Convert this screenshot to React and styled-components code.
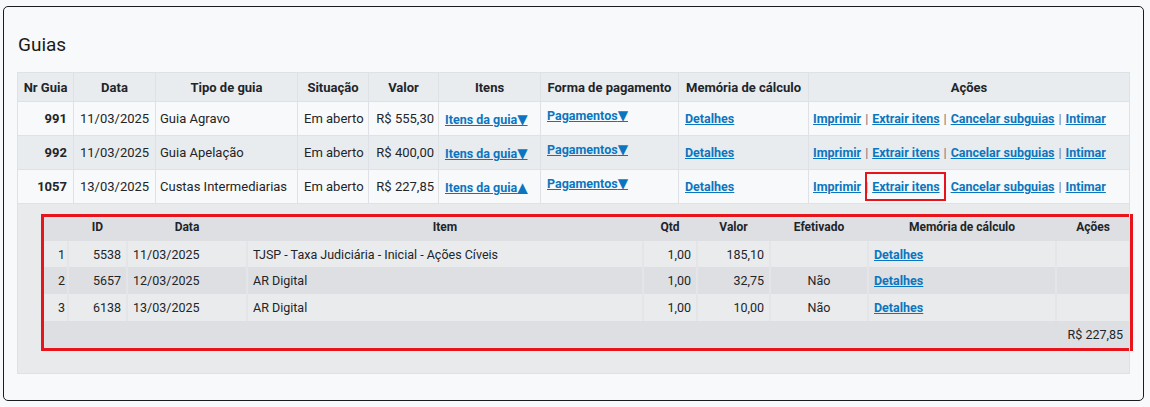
import React from 'react';
import styled, { createGlobalStyle } from 'styled-components';

const GlobalStyle = createGlobalStyle`
  body {
    margin: 0;
    background: #f8f9fa;
    font-family: Roboto, "Liberation Sans", Arial, sans-serif;
    color: #212529;
  }
`;

const Card = styled.div`
  margin: 6px 6px 0 3px;
  width: 1141px;
  height: 395px;
  box-sizing: border-box;
  border: 1px solid #1c1c1c;
  border-radius: 5px;
  background: #f8f9fa;
  padding: 26px 13px 0 13px;
`;

const Title = styled.h2`
  margin: 0 0 15px 1px;
  font-size: 19px;
  font-weight: 400;
  line-height: 24px;
  color: #1a1a1a;
`;

const GuiasTable = styled.table`
  width: 1112px;
  table-layout: fixed;
  border-collapse: collapse;
  font-size: 13px;
`;

const HeadRow = styled.tr`
  height: 29px;
`;

const HeadCell = styled.th`
  padding: 0 4px;
  background: #e9ecef;
  border: 1px solid #dee2e6;
  font-weight: 700;
  text-align: center;
  white-space: nowrap;
`;

const Row = styled.tr`
  height: 34px;
  background: ${p => (p.$striped ? '#e9ecef' : '#f8f9fa')};
`;

const Cell = styled.td`
  padding: 0 ${p => p.$pr || 6}px 0 ${p => p.$pl || 6}px;
  border: 1px solid #dee2e6;
  text-align: ${p => p.$align || 'left'};
  vertical-align: ${p => (p.$top ? 'top' : 'middle')};
  padding-top: ${p => (p.$top ? '5px' : '0')};
  font-weight: ${p => (p.$bold ? 700 : 400)};
  white-space: nowrap;
`;

const Link = styled.a`
  color: #0b76bf;
  font-size: 12.5px;
  font-weight: 700;
  text-decoration: underline;
  cursor: pointer;
`;

const Arrow = styled.span`
  font-family: "DejaVu Sans", sans-serif;
  font-size: 13.5px;
`;

const Sep = styled.span`
  color: #6c757d;
  font-size: 12.5px;
  margin: 0 4px;
`;

const Highlighted = styled(Link)`
  position: relative;
  &::after {
    content: '';
    position: absolute;
    left: -7px;
    right: -6px;
    top: -7px;
    bottom: -7px;
    border: 2px solid #e8141c;
  }
`;

const ExpandedCell = styled.td`
  background: #e9eaec;
  border: 1px solid #dee2e6;
  padding: 10px 0 22px 23px;
`;

const RedFrame = styled.div`
  width: 1092px;
  box-sizing: border-box;
  border: 3px solid #e8141c;
`;

const ItemsTable = styled.table`
  width: 100%;
  table-layout: fixed;
  border-collapse: collapse;
  font-size: 12.5px;
`;

const ItemHead = styled.th`
  height: 24px;
  padding: 3px 4px 0;
  box-sizing: border-box;
  background: #dedfe2;
  font-size: 12px;
  font-weight: 700;
  text-align: center;
  vertical-align: top;
`;

const ItemRow = styled.tr`
  background: ${p => (p.$striped ? '#dedfe2' : '#eaebed')};
`;

const ItemCell = styled.td`
  height: ${p => p.$h || 26}px;
  padding: 0 5px;
  text-align: ${p => p.$align || 'left'};
  border-left: 2px solid #e4e5e8;
  white-space: nowrap;
  &:first-child {
    border-left: none;
    padding-left: 14px;
  }
`;

const FooterRow = styled.tr`
  background: #dedfe2;
`;

const FooterCell = styled.td`
  height: 27px;
  padding: 0 7px;
  text-align: right;
`;

const guias = [
  { nr: '991', data: '11/03/2025', tipo: 'Guia Agravo', valor: 'R$ 555,30', open: false },
  { nr: '992', data: '11/03/2025', tipo: 'Guia Apelação', valor: 'R$ 400,00', open: false },
  { nr: '1057', data: '13/03/2025', tipo: 'Custas Intermediarias', valor: 'R$ 227,85', open: true },
];

const itens = [
  { n: 1, id: '5538', data: '11/03/2025', item: 'TJSP - Taxa Judiciária - Inicial - Ações Cíveis', qtd: '1,00', valor: '185,10', efetivado: '' },
  { n: 2, id: '5657', data: '12/03/2025', item: 'AR Digital', qtd: '1,00', valor: '32,75', efetivado: 'Não' },
  { n: 3, id: '6138', data: '13/03/2025', item: 'AR Digital', qtd: '1,00', valor: '10,00', efetivado: 'Não' },
];

function ItensDaGuia() {
  return (
    <RedFrame>
      <ItemsTable>
        <colgroup>
          <col style={{ width: 24 }} />
          <col style={{ width: 59 }} />
          <col style={{ width: 120 }} />
          <col style={{ width: 396 }} />
          <col style={{ width: 54 }} />
          <col style={{ width: 73 }} />
          <col style={{ width: 98 }} />
          <col style={{ width: 188 }} />
          <col style={{ width: 74 }} />
        </colgroup>
        <thead>
          <tr>
            <ItemHead></ItemHead>
            <ItemHead>ID</ItemHead>
            <ItemHead>Data</ItemHead>
            <ItemHead>Item</ItemHead>
            <ItemHead>Qtd</ItemHead>
            <ItemHead>Valor</ItemHead>
            <ItemHead>Efetivado</ItemHead>
            <ItemHead>Memória de cálculo</ItemHead>
            <ItemHead>Ações</ItemHead>
          </tr>
        </thead>
        <tbody>
          {itens.map((it, i) => (
            <ItemRow key={it.id} $striped={i % 2 === 1}>
              <ItemCell $h={i === 0 ? 26 : 27}>{it.n}</ItemCell>
              <ItemCell $align="right">{it.id}</ItemCell>
              <ItemCell>{it.data}</ItemCell>
              <ItemCell>{it.item}</ItemCell>
              <ItemCell $align="right">{it.qtd}</ItemCell>
              <ItemCell $align="right">{it.valor}</ItemCell>
              <ItemCell $align="center">{it.efetivado}</ItemCell>
              <ItemCell><Link>Detalhes</Link></ItemCell>
              <ItemCell></ItemCell>
            </ItemRow>
          ))}
          <FooterRow>
            <FooterCell colSpan={9}>R$ 227,85</FooterCell>
          </FooterRow>
        </tbody>
      </ItemsTable>
    </RedFrame>
  );
}

export default function App() {
  return (
    <>
      <GlobalStyle />
      <Card>
        <Title>Guias</Title>
        <GuiasTable>
          <colgroup>
            <col style={{ width: 56 }} />
            <col style={{ width: 82 }} />
            <col style={{ width: 142 }} />
            <col style={{ width: 71 }} />
            <col style={{ width: 70 }} />
            <col style={{ width: 102 }} />
            <col style={{ width: 138 }} />
            <col style={{ width: 130 }} />
            <col style={{ width: 321 }} />
          </colgroup>
          <thead>
            <HeadRow>
              <HeadCell>Nr Guia</HeadCell>
              <HeadCell>Data</HeadCell>
              <HeadCell>Tipo de guia</HeadCell>
              <HeadCell>Situação</HeadCell>
              <HeadCell>Valor</HeadCell>
              <HeadCell>Itens</HeadCell>
              <HeadCell>Forma de pagamento</HeadCell>
              <HeadCell>Memória de cálculo</HeadCell>
              <HeadCell>Ações</HeadCell>
            </HeadRow>
          </thead>
          <tbody>
            {guias.map((g, i) => (
              <React.Fragment key={g.nr}>
                <Row $striped={i === 1}>
                  <Cell $align="right" $bold>{g.nr}</Cell>
                  <Cell $align="center">{g.data}</Cell>
                  <Cell $pl={4}>{g.tipo}</Cell>
                  <Cell $align="center">Em aberto</Cell>
                  <Cell $align="right" $pl={2} $pr={4}>{g.valor}</Cell>
                  <Cell><Link>Itens da guia<Arrow>{g.open ? '▲' : '▼'}</Arrow></Link></Cell>
                  <Cell $top><Link>Pagamentos<Arrow>▼</Arrow></Link></Cell>
                  <Cell><Link>Detalhes</Link></Cell>
                  <Cell $pl={4}>
                    <Link>Imprimir</Link>
                    <Sep>|</Sep>
                    {g.open ? <Highlighted>Extrair itens</Highlighted> : <Link>Extrair itens</Link>}
                    <Sep>|</Sep>
                    <Link>Cancelar subguias</Link>
                    <Sep>|</Sep>
                    <Link>Intimar</Link>
                  </Cell>
                </Row>
                {g.open && (
                  <tr>
                    <ExpandedCell colSpan={9}>
                      <ItensDaGuia />
                    </ExpandedCell>
                  </tr>
                )}
              </React.Fragment>
            ))}
          </tbody>
        </GuiasTable>
      </Card>
    </>
  );
}
